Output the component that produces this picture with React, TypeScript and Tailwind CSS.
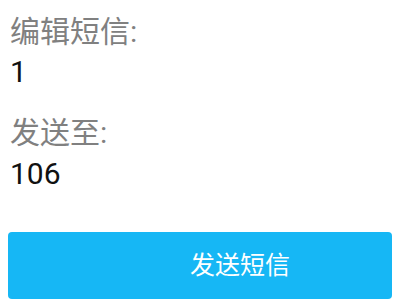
export default function App() {
  return (
    <div className="w-[400px] h-[300px] overflow-hidden bg-white font-['Roboto','Noto_Sans_CJK_SC',sans-serif]">
      <div className="flex flex-col pl-[10px] pt-[12px]">
        <div className="h-[40px] leading-[40px] text-[30px] text-[#808080]">编辑短信:</div>
        <div className="h-[40px] leading-[40px] text-[30px] text-[#111111]">1</div>
        <div className="mt-[21px] h-[40px] leading-[40px] text-[30px] text-[#808080]">发送至:</div>
        <div className="mt-[1px] h-[40px] leading-[40px] text-[30px] text-[#111111]">106</div>
      </div>
      <div className="ml-[8px] mt-[38px] w-[384px] h-[67px] rounded-[4px] bg-[#16b7f5] flex items-center justify-center pl-[80px]">
        <span className="text-[25px] text-white">发送短信</span>
      </div>
    </div>
  )
}
